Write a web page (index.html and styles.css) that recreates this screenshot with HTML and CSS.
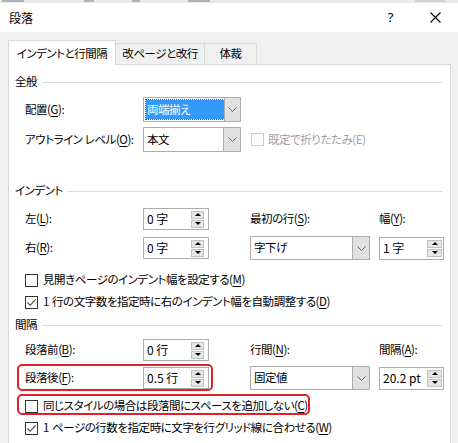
FILE: index.html
```html
<!DOCTYPE html>
<html lang="ja">
<head>
<meta charset="utf-8">
<title>段落</title>
<link rel="stylesheet" href="styles.css">
</head>
<body>
<div class="topstrip">
  <span class="frag f1"></span><span class="frag f2"></span><span class="frag f3"></span><span class="frag f4"></span><span class="frag f5"></span>
</div>
<div class="titlebar">
  <span class="title">段落</span>
  <span class="help">?</span>
  <span class="close"><svg width="11" height="11" viewBox="0 0 11 11"><path d="M0.5 0.5 L10.5 10.5 M10.5 0.5 L0.5 10.5" stroke="#000" stroke-width="1.1" fill="none"/></svg></span>
</div>
<div class="dialog">
  <div class="tabs">
    <div class="tab active">インデントと行間隔</div>
    <div class="tab t2">改ページと改行</div>
    <div class="tab t3">体裁</div>
  </div>
  <div class="panel">
    <div class="gh g1"><span>全般</span></div>
    <div class="row r1">
      <span class="lbl">配置(<u>G</u>):</span>
      <div class="combo narrow"><div class="val"><span class="sel">両端揃え</span></div><div class="btn"><svg width="9" height="5" viewBox="0 0 9 5"><path d="M0.5 0.5 L4.5 4.5 L8.5 0.5" stroke="#666" fill="none"/></svg></div></div>
    </div>
    <div class="row r2">
      <span class="lbl">アウトライン レベル(<u>O</u>):</span>
      <div class="combo narrow"><div class="val">本文</div><div class="btn"><svg width="9" height="5" viewBox="0 0 9 5"><path d="M0.5 0.5 L4.5 4.5 L8.5 0.5" stroke="#666" fill="none"/></svg></div></div>
      <span class="cb disabled"></span><span class="dis-text">既定で折りたたみ(E)</span>
    </div>

    <div class="gh g2"><span>インデント</span></div>
    <div class="grid g-indent">
      <span class="lbl">左(<u>L</u>):</span>
      <div class="spin"><span class="val">0 字</span><span class="arrows"><span class="up"></span><span class="dn"></span></span></div>
      <span class="lbl">最初の行(<u>S</u>):</span>
      <span class="lbl">幅(<u>Y</u>):</span>

      <span class="lbl">右(<u>R</u>):</span>
      <div class="spin"><span class="val">0 字</span><span class="arrows"><span class="up"></span><span class="dn"></span></span></div>
      <div class="combo wide"><div class="val">字下げ</div><div class="btn"><svg width="9" height="5" viewBox="0 0 9 5"><path d="M0.5 0.5 L4.5 4.5 L8.5 0.5" stroke="#666" fill="none"/></svg></div></div>
      <div class="spin right"><span class="val">1 字</span><span class="arrows"><span class="up"></span><span class="dn"></span></span></div>
    </div>
    <div class="row cbrow c1"><span class="cb"></span><span>見開きページのインデント幅を設定する(<u>M</u>)</span></div>
    <div class="row cbrow"><span class="cb checked"><svg width="11" height="11" viewBox="0 0 11 11"><path d="M1.5 5.5 L4.2 8.3 L9.6 2.4" stroke="#444" stroke-width="1.1" fill="none"/></svg></span><span><span class="num">1 </span>行の文字数を指定時に右のインデント幅を自動調整する(<u>D</u>)</span></div>

    <div class="gh g3"><span>間隔</span></div>
    <div class="grid g-space">
      <span class="lbl">段落前(<u>B</u>):</span>
      <div class="spin"><span class="val">0 行</span><span class="arrows"><span class="up"></span><span class="dn"></span></span></div>
      <span class="lbl">行間(<u>N</u>):</span>
      <span class="lbl">間隔(<u>A</u>):</span>

      <span class="lbl">段落後(<u>F</u>):</span>
      <div class="spin"><span class="val">0.5 行</span><span class="arrows"><span class="up"></span><span class="dn"></span></span></div>
      <div class="combo wide"><div class="val">固定値</div><div class="btn"><svg width="9" height="5" viewBox="0 0 9 5"><path d="M0.5 0.5 L4.5 4.5 L8.5 0.5" stroke="#666" fill="none"/></svg></div></div>
      <div class="spin right"><span class="val">20.2 pt</span><span class="arrows"><span class="up"></span><span class="dn"></span></span></div>
      <div class="mark mark1"></div>
    </div>
    <div class="row cbrow c3"><span class="cb"></span><span>同じスタイルの場合は段落間にスペースを追加しない(<u>C</u>)</span><div class="mark mark2"></div></div>
    <div class="row cbrow"><span class="cb checked"><svg width="11" height="11" viewBox="0 0 11 11"><path d="M1.5 5.5 L4.2 8.3 L9.6 2.4" stroke="#444" stroke-width="1.1" fill="none"/></svg></span><span><span class="num">1 </span>ページの行数を指定時に文字を行グリッド線に合わせる(<u>W</u>)</span></div>
  </div>
</div>
</body>
</html>
```

FILE: styles.css
```css
* { box-sizing: border-box; }
html, body { margin: 0; padding: 0; }
body {
  width: 458px;
  height: 443px;
  overflow: hidden;
  background: #f0f0f0;
  font-family: "Noto Sans CJK JP", "Noto Sans", sans-serif;
  font-size: 11.5px;
  letter-spacing: -0.45px;
  line-height: 1;
  color: #000;
  font-feature-settings: "palt";
}
u { text-decoration: underline; text-underline-offset: 2px; }
.num { letter-spacing: 0; white-space: pre; }

.topstrip {
  height: 3px;
  background: #e9e9e9;
  display: flex;
  align-items: flex-start;
  overflow: hidden;
}
.frag { height: 2px; background: #9a9a9a; opacity: 0.7; }
.f1 { width: 22px; margin-left: 2px; }
.f2 { width: 10px; margin-left: 60px; }
.f3 { width: 8px; margin-left: 38px; }
.f4 { width: 22px; margin-left: 48px; }
.f5 { width: 30px; margin-left: 205px; background: #c8c8c8; }

.titlebar {
  height: 29px;
  background: #fff;
  display: flex;
  align-items: center;
  padding-left: 9px;
}
.title { flex: 1; font-size: 12px; letter-spacing: 0; }
.help { font-family: "Noto Sans", sans-serif; font-size: 13px; margin-right: 37px; }
.close { width: 11px; height: 11px; margin-right: 17px; display: flex; }

.dialog { padding: 8px 7px 0 8px; }
.tabs { display: flex; align-items: flex-end; height: 24px; }
.tab {
  height: 21px;
  border: 1px solid #d9d9d9;
  border-bottom: none;
  background: #f0f0f0;
  display: flex;
  align-items: center;
  justify-content: center;
}
.tab.active {
  width: 108px;
  height: 25px;
  background: #fff;
  margin-bottom: -1px;
  position: relative;
  z-index: 1;
  padding-top: 1px;
}
.t2 { width: 89px; border-left: none; }
.t3 { width: 52px; border-left: none; }

.panel {
  width: 443px;
  height: 379px;
  background: #fff;
  border: 1px solid #d9d9d9;
  border-bottom: none;
}

.gh {
  height: 18px;
  display: flex;
  align-items: center;
  gap: 5px;
  padding: 0 7px 0 6px;
}
.gh::after { content: ""; flex: 1; height: 1px; background: #dcdcdc; }
.g1 { margin-top: 8px; }
.g2 { margin-top: 30px; }
.g3 { margin-top: 3px; }

.row { display: flex; align-items: center; margin-left: 16px; position: relative; }
.lbl { width: 118px; white-space: nowrap; }
.r1 { margin-top: 6px; height: 25px; }
.r2 { margin-top: 5px; height: 25px; }

.combo {
  height: 25px;
  border: 1px solid #adadad;
  background: #fff;
  display: flex;
}
.combo.narrow { width: 98px; }
.combo.wide { width: 120px; height: 24px; }
.combo .val { flex: 1; display: flex; align-items: center; padding-left: 3px; }
.combo .btn {
  width: 17px;
  background: #e1e1e1;
  border-left: 1px solid #adadad;
  display: flex;
  align-items: center;
  justify-content: center;
}
.sel {
  display: flex;
  align-items: center;
  height: 19px;
  width: 78px;
  margin-left: -1px;
  padding-left: 1px;
  background: #3399ff;
  color: #fff;
  outline: 1px dotted #1d5fa8;
}

.cb {
  width: 13px;
  height: 13px;
  border: 1px solid #333;
  background: #fff;
  margin-right: 5px;
  flex: none;
  display: flex;
  align-items: center;
  justify-content: center;
}
.cb.disabled { border-color: #cccccc; margin-left: 10px; margin-right: 4px; }
.dis-text { color: #a0a0a0; }

.grid {
  display: grid;
  grid-template-columns: 118px 107px 129px 65px;
  align-items: center;
  margin-left: 16px;
  position: relative;
}
.g-indent { margin-top: 7px; grid-template-rows: 24px 24px; row-gap: 5px; }
.g-space { margin-top: 4px; grid-template-rows: 24px 24px; row-gap: 4px; }

.spin {
  width: 66px;
  height: 22px;
  border: 1px solid #adadad;
  background: #fff;
  display: flex;
  align-items: center;
  padding-left: 3px;
}
.spin.right { width: 65px; height: 23px; }
.spin .val { flex: 1; white-space: pre; font-size: 12px; letter-spacing: 0; }
.arrows { display: flex; flex-direction: column; gap: 1px; margin-right: 4px; }
.spin.right .arrows { margin-right: 1px; }
.arrows span {
  width: 13px;
  height: 8px;
  background: #e6e6e6;
  border: 1px solid #c2c2c2;
  display: flex;
  align-items: center;
  justify-content: center;
}
.spin.right .arrows span { width: 15px; }
.arrows .up::before {
  content: "";
  border-left: 3px solid transparent;
  border-right: 3px solid transparent;
  border-bottom: 3px solid #000;
}
.arrows .dn::before {
  content: "";
  border-left: 3px solid transparent;
  border-right: 3px solid transparent;
  border-top: 3px solid #000;
}

.cbrow { height: 22px; }
.c1 { margin-top: 9px; }
.c3 { margin-top: 5px; }

.mark {
  position: absolute;
  border: 2px solid #e3202a;
  border-radius: 5px;
  pointer-events: none;
}
.mark1 { left: -8px; top: 26px; width: 196px; height: 27px; }
.mark2 { left: -8px; top: -1px; width: 293px; height: 21px; }
```
